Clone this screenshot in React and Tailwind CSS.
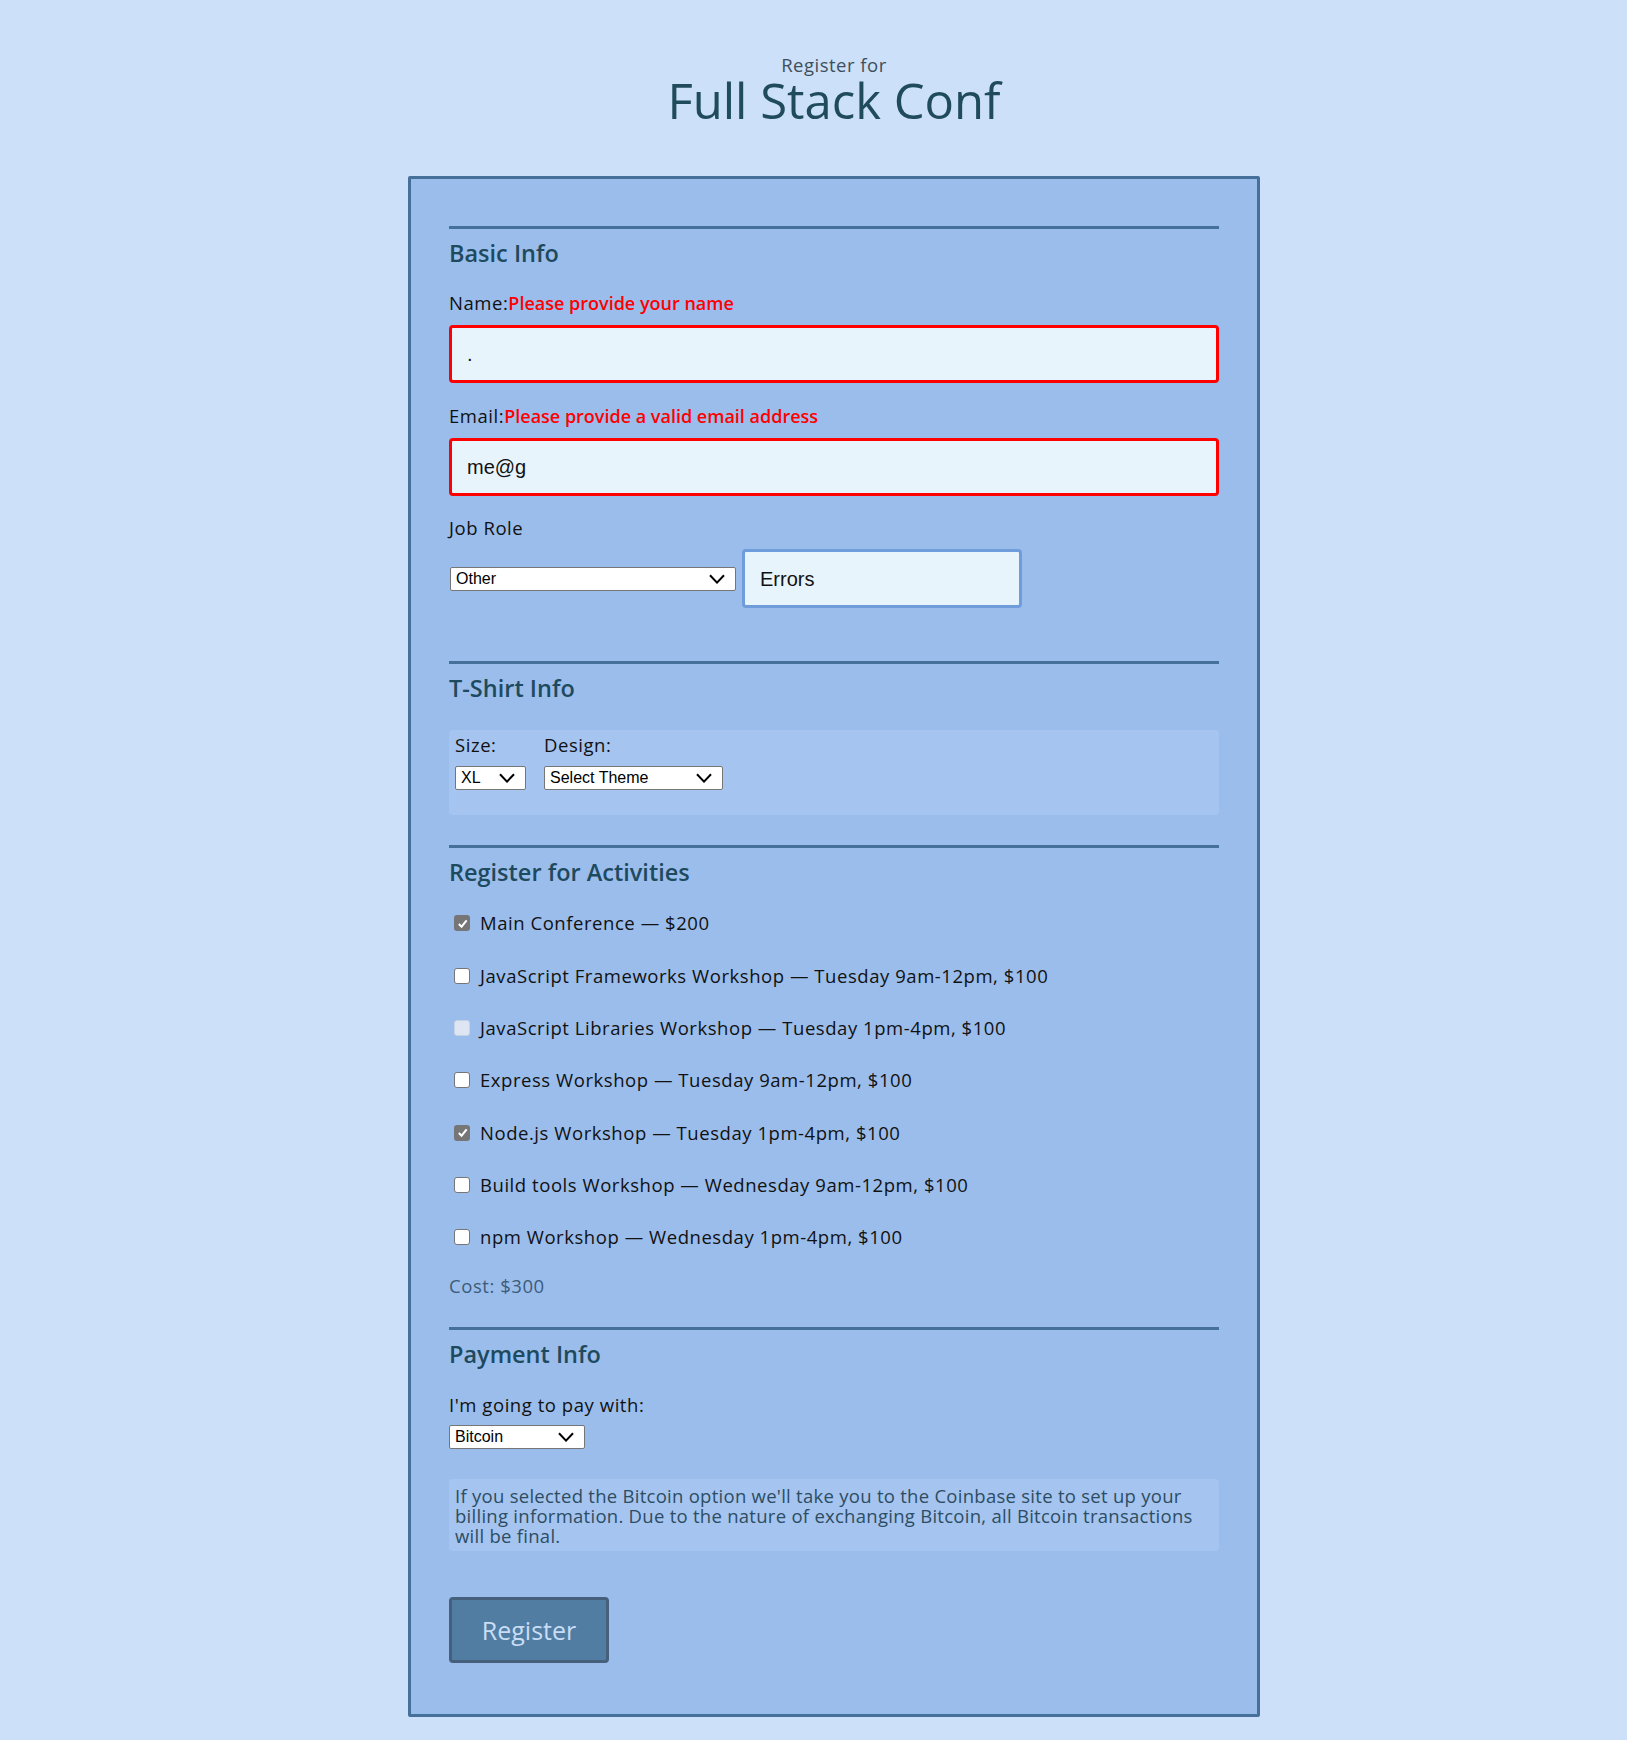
import React from "react";

const label = "text-[18.5px] tracking-[0.55px] leading-[24px] text-[#111]";
const errorText = "text-[18px] tracking-normal font-semibold text-[#ff0000]";

const Chevron = ({ className = "" }) => (
  <svg viewBox="0 0 16 10" className={className} fill="none">
    <polyline points="1,1.2 8,8.6 15,1.2" stroke="#000" strokeWidth="2" />
  </svg>
);

const FakeSelect = ({ value, className = "" }) => (
  <div
    className={`flex items-center justify-between h-[24px] bg-white border border-[#767676] rounded-[2px] pl-[5px] pr-[10px] text-[16px] leading-none text-black font-['Liberation_Sans',Arial,sans-serif] ${className}`}
  >
    <span>{value}</span>
    <Chevron className="w-[16px] h-[10px]" />
  </div>
);

const Box = ({ state }) => {
  if (state === "checked") {
    return (
      <span className="w-[16px] h-[16px] rounded-[3px] bg-[#767676] flex items-center justify-center shrink-0">
        <svg viewBox="0 0 12 12" className="w-[11px] h-[11px]">
          <polyline points="2,6.5 5,9.5 10.5,2.5" fill="none" stroke="white" strokeWidth="2.2" />
        </svg>
      </span>
    );
  }
  if (state === "disabled") {
    return <span className="w-[16px] h-[16px] rounded-[3px] bg-[#dde6f2] border border-[#c5d3e6] shrink-0" />;
  }
  return <span className="w-[16px] h-[16px] rounded-[3px] bg-white border border-[#767676] shrink-0" />;
};

const Section = ({ title, children }) => (
  <div>
    <div className="h-[3px] bg-[#44709a]" />
    <h2 className="mt-[9px] h-[30px] leading-[30px] text-[23.5px] font-semibold text-[#1e4a5e]">{title}</h2>
    {children}
  </div>
);

const activities = [
  { label: "Main Conference — $200", state: "checked" },
  { label: "JavaScript Frameworks Workshop — Tuesday 9am-12pm, $100", state: "" },
  { label: "JavaScript Libraries Workshop — Tuesday 1pm-4pm, $100", state: "disabled" },
  { label: "Express Workshop — Tuesday 9am-12pm, $100", state: "" },
  { label: "Node.js Workshop — Tuesday 1pm-4pm, $100", state: "checked" },
  { label: "Build tools Workshop — Wednesday 9am-12pm, $100", state: "" },
  { label: "npm Workshop — Wednesday 1pm-4pm, $100", state: "" },
];

const App = () => {
  return (
    <div className="min-h-[1740px] bg-[#cde0fa] font-['Open_Sans',sans-serif] pt-[55px]">
      <div className="ml-[408px] w-[852px]">
        <header className="text-center text-[#1f4b5d]">
          <p className="text-[18.5px] tracking-[0.5px] leading-[20px] text-[#3d4f5c]">Register for</p>
          <h1 className="text-[49px] leading-[50px] font-normal">Full Stack Conf</h1>
        </header>

        <form className="mt-[51px] border-[3px] border-[#44709a] bg-[#9bbdec] px-[38px] pt-[47px] pb-[51px] rounded-[2px]">
          <Section title="Basic Info">
            <p className={`mt-[23px] ${label}`}>
              Name:<span className={errorText}>Please provide your name</span>
            </p>
            <div className="mt-[10px] h-[58px] border-[3px] border-[#ff0000] rounded-[4px] bg-[#e8f4fc] flex items-center px-[15px] text-[20px] text-[#111] font-['Liberation_Sans',Arial,sans-serif]">
              .
            </div>
            <p className={`mt-[21px] ${label}`}>
              Email:<span className={errorText}>Please provide a valid email address</span>
            </p>
            <div className="mt-[10px] h-[58px] border-[3px] border-[#ff0000] rounded-[4px] bg-[#e8f4fc] flex items-center px-[15px] text-[20px] text-[#111] font-['Liberation_Sans',Arial,sans-serif]">
              me@g
            </div>
            <p className={`mt-[20px] ${label}`}>Job Role</p>
            <div className="mt-[9px] flex items-center gap-[6px] pl-[1px]">
              <FakeSelect value="Other" className="w-[286px]" />
              <div className="w-[280px] h-[59px] border-[3px] border-[#6f9cdb] rounded-[4px] bg-[#e8f4fc] flex items-center px-[15px] text-[20px] text-[#111] font-['Liberation_Sans',Arial,sans-serif]">
                Errors
              </div>
            </div>
          </Section>

          <div className="mt-[53px]">
            <Section title="T-Shirt Info">
              <div className="mt-[27px] h-[85px] bg-[#a5c4f0] rounded-[4px] pl-[6px] pt-[4px] flex gap-[18px]">
                <div>
                  <p className="text-[18.5px] tracking-[0.55px] leading-[22px] text-[#111]">Size:</p>
                  <FakeSelect value="XL" className="mt-[10px] w-[71px]" />
                </div>
                <div>
                  <p className="text-[18.5px] tracking-[0.55px] leading-[22px] text-[#111]">Design:</p>
                  <FakeSelect value="Select Theme" className="mt-[10px] w-[179px]" />
                </div>
              </div>
            </Section>
          </div>

          <div className="mt-[30px]">
            <Section title="Register for Activities">
              <div className="mt-[10px]">
                {activities.map((a) => (
                  <div key={a.label} className="h-[52.35px] flex items-center pl-[5px] gap-[10px]">
                    <Box state={a.state} />
                    <span className="text-[18.5px] tracking-[0.55px] text-[#111]">{a.label}</span>
                  </div>
                ))}
              </div>
              <p className="mt-[11px] text-[18.5px] tracking-[0.55px] leading-[24px] text-[#3c5c78]">Cost: $300</p>
            </Section>
          </div>

          <div className="mt-[29px]">
            <Section title="Payment Info">
              <p className={`mt-[24px] ${label}`}>I'm going to pay with:</p>
              <FakeSelect value="Bitcoin" className="mt-[8px] w-[136px]" />
              <div className="mt-[30px] h-[72px] bg-[#a5c4f0] rounded-[4px] pl-[6px] pt-[7px] text-[18.5px] tracking-[0.27px] leading-[20px] text-[#2d4d62]">
                If you selected the Bitcoin option we'll take you to the Coinbase site to set up your
                <br />
                billing information. Due to the nature of exchanging Bitcoin, all Bitcoin transactions
                <br />
                will be final.
              </div>
            </Section>
          </div>

          <button
            type="button"
            className="mt-[46px] w-[160px] h-[66px] bg-[#527da2] border-[3px] border-[#46607c] rounded-[4px] text-[25px] text-[#c8ddf5]"
          >
            Register
          </button>
        </form>
      </div>
    </div>
  );
};

export default App;
